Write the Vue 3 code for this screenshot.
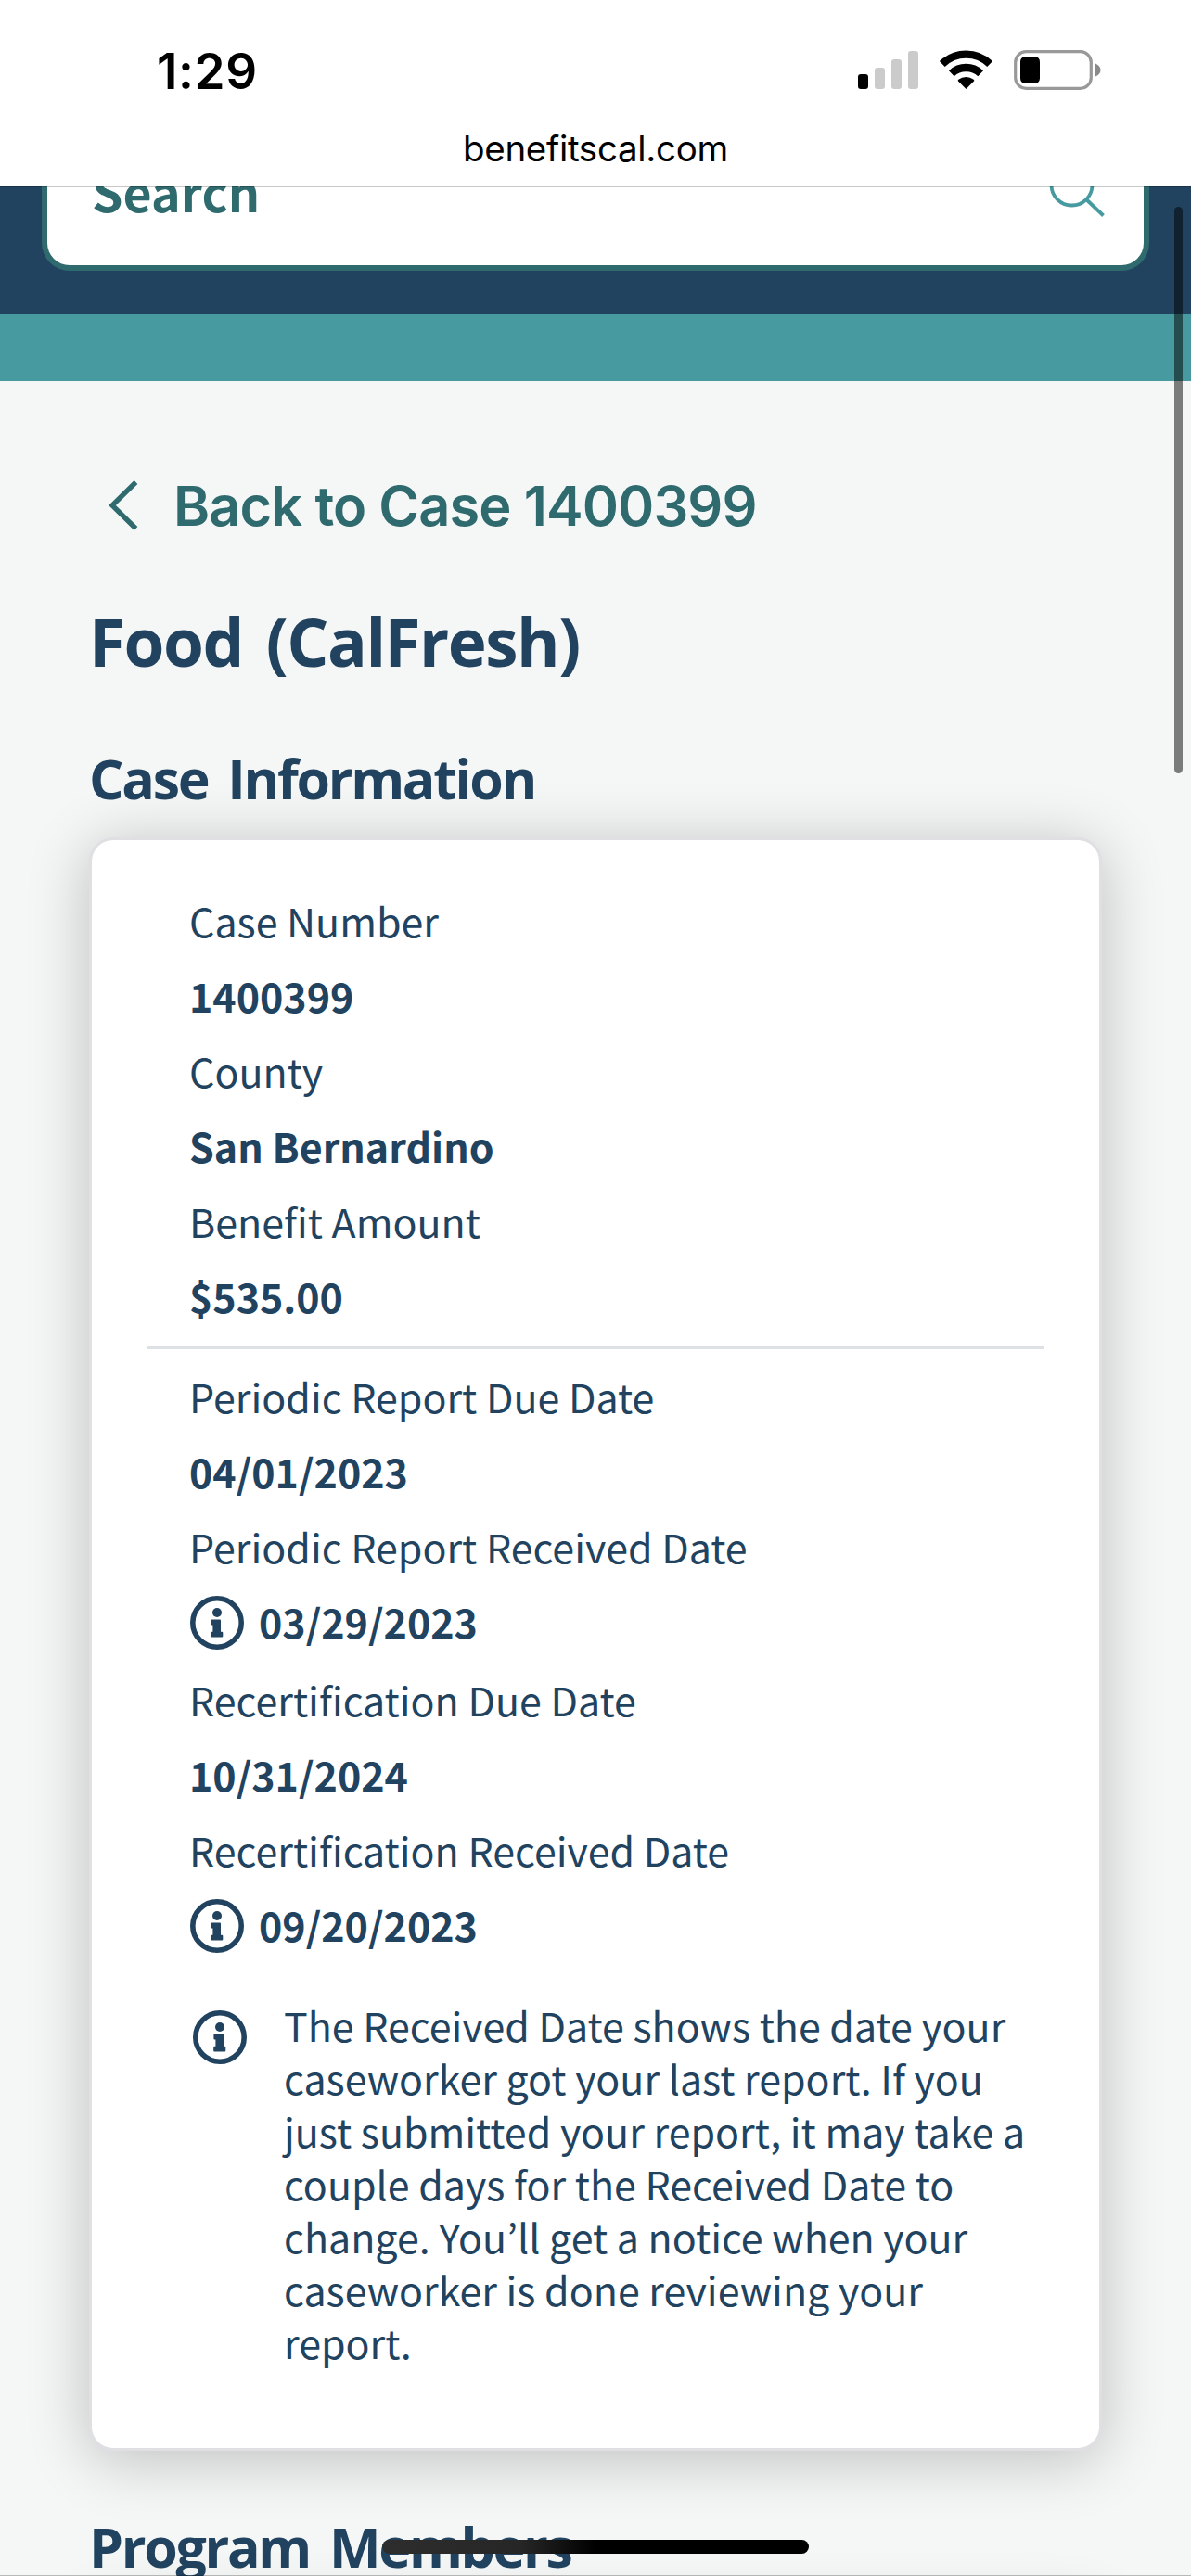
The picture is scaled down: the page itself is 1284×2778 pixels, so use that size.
<script setup>
import { h } from 'vue'

const caseRows = [
  { label: 'Case Number', value: '1400399' },
  { label: 'County', value: 'San Bernardino' },
  { label: 'Benefit Amount', value: '$535.00' },
]

const reportRows = [
  { label: 'Periodic Report Due Date', value: '04/01/2023' },
  { label: 'Periodic Report Received Date', value: '03/29/2023', info: true },
  { label: 'Recertification Due Date', value: '10/31/2024' },
  { label: 'Recertification Received Date', value: '09/20/2023', info: true },
]

const noteLines = [
  'The Received Date shows the date your',
  'caseworker got your last report. If you',
  'just submitted your report, it may take a',
  'couple days for the Received Date to',
  'change. You’ll get a notice when your',
  'caseworker is done reviewing your',
  'report.',
]

const InfoIcon = () =>
  h('svg', { width: 58, height: 58, viewBox: '0 0 58 58', fill: 'none' }, [
    h('circle', { cx: 29, cy: 29, r: 26.2, stroke: '#21435f', 'stroke-width': 5.6 }),
    h('circle', { cx: 29, cy: 18, r: 5, fill: '#21435f' }),
    h('path', {
      d: 'M23.5 25.5h8.5q1 0 1 1v12.3h1.3q1 0 1 1v3.7q0 1-1 1h-11.1q-1 0-1-1v-3.7q0-1 1-1h1.2v-7.2h-1q-1 0-1-1v-4.1q0-1 1.100-1z',
      fill: '#21435f',
    }),
  ])
</script>

<template>
  <div class="screen">
    <header class="browser">
      <div class="status">
        <span class="time">1:29</span>
        <svg class="status-icons" width="264" height="44" viewBox="0 0 264 44">
          <rect x="0" y="26" width="11" height="16" rx="3" />
          <g fill="#cbcbcb">
            <rect x="18" y="19" width="11" height="23" rx="3" />
            <rect x="36" y="10" width="11" height="32" rx="3" />
            <rect x="54" y="1" width="11" height="41" rx="3" />
          </g>
          <path d="M116.500 42 107.800 33.200Q107.500 32.400 108.300 31.800A13.500 13.500 0 0 1 124.700 31.800Q125.500 32.400 125.200 33.200Z" />
          <g fill="none" stroke="#000" stroke-width="8.400">
            <path d="M100.800 25.200A23 23 0 0 1 132.200 25.200" />
            <path d="M90.800 15A37 37 0 0 1 142.200 15" />
          </g>
          <rect x="169.700" y="1.700" width="81.600" height="39.600" rx="11.500" fill="none" stroke="#999" stroke-width="3.200" />
          <rect x="175" y="7" width="21" height="29" rx="5.500" />
          <path d="M256 14.500Q261.500 17 261.500 21.500T256 28.500Z" fill="#8a8a8a" />
        </svg>
      </div>
      <div class="url"><span>benefitscal.com</span></div>
    </header>

    <main class="page">
      <div class="banner">
        <div class="search">
          <span class="search-text">Search</span>
          <svg class="search-icon" width="62" height="64" viewBox="0 0 62 64" fill="none" stroke="#489aa1" stroke-width="3.800">
            <circle cx="25.500" cy="29.500" r="22" />
            <path d="M41 45 59.500 62.500" />
          </svg>
        </div>
      </div>
      <div class="strip"></div>

      <a class="back">
        <svg width="32" height="54" viewBox="0 0 32 54" fill="none" stroke="#2f6b6e" stroke-width="5.400">
          <path d="M29.500 2 4 27 29.500 52" />
        </svg>
        <span>Back to Case 1400399</span>
      </a>
      <h1 class="title"><span>Food (CalFresh)</span></h1>
      <h2 class="subtitle info"><span>Case Information</span></h2>

      <section class="card">
        <div class="group">
          <template v-for="row in caseRows" :key="row.label">
            <div class="row"><span>{{ row.label }}</span></div>
            <div class="row value"><span>{{ row.value }}</span></div>
          </template>
        </div>
        <hr class="divider" />
        <div class="group">
          <template v-for="row in reportRows" :key="row.label">
            <div class="row"><span>{{ row.label }}</span></div>
            <div class="row value" :class="{ flagged: row.info }">
              <InfoIcon v-if="row.info" />
              <span>{{ row.value }}</span>
            </div>
          </template>
        </div>
        <div class="note">
          <InfoIcon />
          <p><span v-for="line in noteLines" :key="line" class="line">{{ line }}</span></p>
        </div>
      </section>

      <h2 class="subtitle members"><span>Program Members</span></h2>
      <section class="card next"></section>
    </main>

    <div class="scrollbar"></div>
    <div class="home"></div>
    <div class="toolbar-edge"></div>
  </div>
</template>

<style>
body {
  margin: 0;
}
</style>

<style scoped>
.screen {
  position: relative;
  display: flex;
  flex-direction: column;
  width: 1284px;
  height: 2778px;
  overflow: hidden;
  background: #f5f7f7;
  color: #21435f;
  font-family: "Noto Sans CJK JP", "Noto Sans", sans-serif;
}
.browser {
  position: relative;
  z-index: 1;
  flex: none;
  height: 201px;
  background: #fff;
  box-shadow: 0 1px 0 rgba(0, 0, 0, 0.220);
  color: #000;
  font-family: Inter, sans-serif;
}
.status {
  display: flex;
  justify-content: space-between;
  align-items: flex-start;
  height: 130px;
  padding: 0 95px 0 169px;
}
.time {
  margin-top: 47px;
  font-size: 53px;
  line-height: 60px;
  font-weight: 600;
  letter-spacing: 0.600px;
}
.status-icons {
  margin-top: 54px;
}
.url {
  display: flex;
  justify-content: center;
  font-size: 38.500px;
  line-height: 60px;
  letter-spacing: -0.300px;
}
.page {
  flex: 1;
  min-height: 0;
  display: flex;
  flex-direction: column;
  overflow: hidden;
}
.page > * {
  flex: none;
}
.banner {
  height: 138px;
  padding: 0 45px;
  background: #21435f;
}
.search {
  box-sizing: border-box;
  display: flex;
  justify-content: space-between;
  height: 91px;
  padding: 0 41px 0 48px;
  background: #fff;
  border: 6px solid #2f6b6e;
  border-top: 0;
  border-radius: 0 0 30px 30px;
  overflow: hidden;
}
.search-text {
  margin-top: -35px;
  height: 80px;
  line-height: 80px;
  font-size: 53.700px;
  font-weight: 700;
  color: #2f6b6e;
}
.search-icon {
  margin-top: -31px;
}
.strip {
  height: 72px;
  background: #489aa1;
}
.back {
  display: flex;
  align-items: center;
  gap: 38px;
  height: 72px;
  margin: 98px 0 0 117px;
  font-family: Inter, sans-serif;
  font-size: 59.500px;
  font-weight: 600;
  line-height: 72px;
  letter-spacing: -0.900px;
  color: #2f6b6e;
}
.title,
.subtitle {
  margin: 0 0 0 96px;
  font-family: "Open Sans", "Noto Sans", sans-serif;
  font-weight: 700;
}
.title {
  margin-top: 61px;
  font-size: 71px;
  line-height: 100px;
  letter-spacing: -1.500px;
  word-spacing: 8px;
}
.subtitle {
  font-size: 59px;
  line-height: 80px;
  letter-spacing: -2.300px;
  word-spacing: 8px;
}
.info {
  margin-top: 57px;
}
.card {
  box-sizing: border-box;
  height: 1740px;
  margin: 24px 96px 0;
  padding: 46px 60px 0;
  background: #fff;
  border: 3px solid #dfdfe4;
  border-radius: 26px;
  box-shadow: 0 9px 66px rgba(0, 0, 0, 0.230);
}
.group {
  padding-left: 45px;
}
.row {
  display: flex;
  height: 81px;
  line-height: 81px;
  font-size: 42.950px;
  white-space: nowrap;
}
.value {
  font-weight: 700;
}
.flagged {
  height: 84px;
  gap: 16px;
}
.flagged svg {
  margin: 13px 0 0 1px;
}
.divider {
  height: 3px;
  margin: 14px 0 10px;
  border: 0;
  background: #dde1e5;
}
.note {
  display: flex;
  gap: 40px;
  margin: 36px 0 0 49px;
  font-size: 42.950px;
  line-height: 57px;
}
.note svg {
  flex: none;
  margin-top: 13px;
}
.note p {
  margin: 0;
}
.line {
  display: block;
  white-space: nowrap;
}
.members {
  margin-top: 63px;
}
.scrollbar {
  position: absolute;
  top: 223px;
  right: 9px;
  width: 9px;
  height: 611px;
  border-radius: 5px;
  background: rgba(0, 0, 0, 0.5);
}
.home {
  position: absolute;
  left: 412px;
  bottom: 24px;
  width: 460px;
  height: 15px;
  border-radius: 8px;
  background: linear-gradient(90deg, #2d2d2d 0, #262626 150px, #000 230px);
}
.toolbar-edge {
  position: absolute;
  left: 0;
  right: 0;
  bottom: 0;
  height: 1px;
  background: rgba(0, 0, 0, 0.250);
}
</style>
